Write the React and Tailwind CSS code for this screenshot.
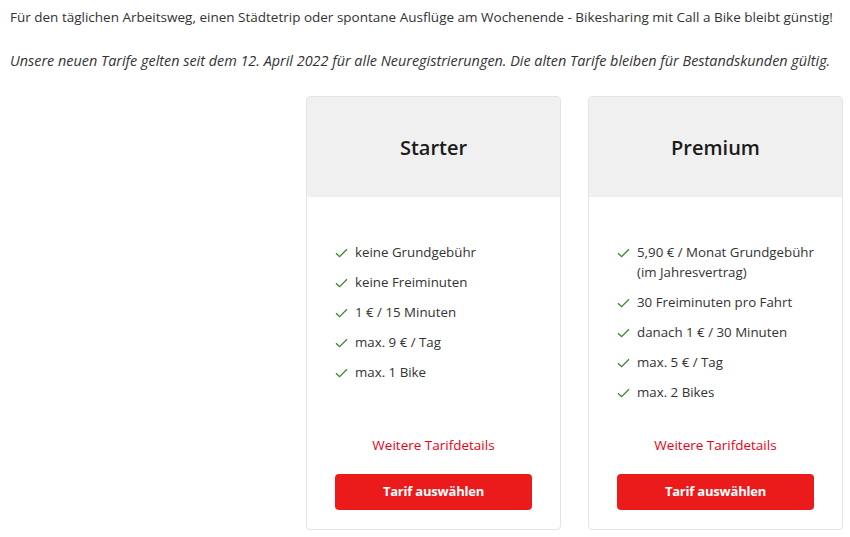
import React from "react";

const font = { fontFamily: '"Open Sans", "Noto Sans", sans-serif' };

function Check() {
  return (
    <svg width="13" height="10" viewBox="0 0 13 10" className="shrink-0 mt-[6px]">
      <path d="M1 5.2 L4.6 8.6 L12 1.2" fill="none" stroke="#408335" strokeWidth="1.3" />
    </svg>
  );
}

function Card({ title, items }) {
  return (
    <div className="flex flex-col border border-[#e4e4e4] rounded-[4px] bg-white overflow-hidden">
      <div className="h-[100px] bg-[#f0f0f0] flex items-center justify-center pt-[2px]">
        <span className="text-[20px] font-semibold text-[#1b1b1b]">{title}</span>
      </div>
      <div className="flex flex-col flex-1 px-7 pt-[45px] pb-[19px]">
        <ul className="flex flex-col gap-[10px]">
          {items.map((it, i) => (
            <li key={i} className="flex gap-[7px] text-[13.3px] leading-[20px] text-[#333] whitespace-nowrap">
              <Check />
              <span>{it}</span>
            </li>
          ))}
        </ul>
        <div className="mt-auto pt-[33px] text-center text-[13.5px] leading-[20px] text-[#ec0016]">
          Weitere Tarifdetails
        </div>
        <button className="mt-[19px] h-[36px] w-full rounded-[4px] bg-[#ec1b1b] text-white text-[13px] font-bold tracking-[-0.2px]">
          Tarif auswählen
        </button>
      </div>
    </div>
  );
}

export default function App() {
  return (
    <div className="w-[850px] h-[537px] bg-white overflow-hidden" style={font}>
      <p className="pl-[10px] pt-[7px] text-[13.5px] leading-[20px] text-[#333] whitespace-nowrap">
        Für den täglichen Arbeitsweg, einen Städtetrip oder spontane Ausflüge am Wochenende - Bikesharing mit Call a Bike bleibt günstig!
      </p>
      <p className="pl-[10px] mt-[24px] text-[14.4px] leading-[20px] text-[#333] italic whitespace-nowrap">
        Unsere neuen Tarife gelten seit dem 12. April 2022 für alle Neuregistrierungen. Die alten Tarife bleiben für Bestandskunden gültig.
      </p>
      <div className="grid grid-cols-[255px_255px_255px] gap-[27px] pl-[24px] mt-[25px]">
        <div />
        <Card
          title="Starter"
          items={["keine Grundgebühr", "keine Freiminuten", "1 € / 15 Minuten", "max. 9 € / Tag", "max. 1 Bike"]}
        />
        <Card
          title="Premium"
          items={[
            <>5,90 € / Monat Grundgebühr<br />(im Jahresvertrag)</>,
            "30 Freiminuten pro Fahrt",
            "danach 1 € / 30 Minuten",
            "max. 5 € / Tag",
            "max. 2 Bikes",
          ]}
        />
      </div>
    </div>
  );
}
